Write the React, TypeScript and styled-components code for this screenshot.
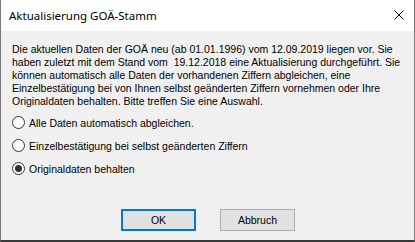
import React, { useState } from "react";
import styled, { createGlobalStyle } from "styled-components";

const Global = createGlobalStyle`
  html, body { margin: 0; padding: 0; background: #f0f0f0; }
  #root { width: 415px; height: 242px; }
`;

const Window = styled.div`
  box-sizing: border-box;
  width: 415px;
  height: 242px;
  display: flex;
  flex-direction: column;
  background: #f0f0f0;
  border-left: 1px solid #7a7a7a;
  border-right: 1px solid #7a7a7a;
  border-bottom: 2px solid #3a3a3a;
  font-family: "Liberation Sans", Arial, sans-serif;
`;

const TitleBar = styled.div`
  height: 31px;
  flex: none;
  background: #ffffff;
  display: flex;
  align-items: center;
  padding-left: 8px;
  padding-right: 10px;
`;

const Title = styled.div`
  flex: 1;
  font-family: "Noto Sans", "Open Sans", sans-serif;
  font-size: 11.5px;
  color: #000;
  padding-bottom: 1px;
`;

const CloseIcon = styled.svg`
  width: 10px;
  height: 10px;
  margin-top: -1px;
`;

const Body = styled.div`
  flex: 1;
  display: flex;
  flex-direction: column;
  padding: 12px 11px 0 11px;
`;

const Message = styled.div`
  font-size: 10.5px;
  line-height: 13px;
  color: #000;
  white-space: pre;
`;

const RadioGroup = styled.div`
  display: flex;
  flex-direction: column;
  margin-top: 3px;
`;

const RadioRow = styled.label`
  height: 23px;
  display: flex;
  align-items: center;
  gap: 4px;
  font-size: 10.5px;
  color: #000;
  cursor: default;
`;

const RadioCircle = styled.span<{ $checked: boolean }>`
  box-sizing: border-box;
  width: 13px;
  height: 13px;
  border-radius: 50%;
  border: 1px solid #333333;
  background: #ffffff;
  display: flex;
  align-items: center;
  justify-content: center;
  &::after {
    content: "";
    width: 7px;
    height: 7px;
    border-radius: 50%;
    background: #333333;
    display: ${(p) => (p.$checked ? "block" : "none")};
  }
`;

const ButtonRow = styled.div`
  display: flex;
  gap: 24px;
  margin-top: 29px;
  padding-left: 109px;
`;

const Button = styled.button<{ $default?: boolean }>`
  box-sizing: border-box;
  width: 75px;
  height: 22px;
  padding: 0;
  background: #e1e1e1;
  border: ${(p) => (p.$default ? "2px solid #0078d7" : "1px solid #adadad")};
  font-family: "Liberation Sans", Arial, sans-serif;
  font-size: 10.5px;
  color: #000;
`;

const lines = [
  "Die aktuellen Daten der GOÄ neu (ab 01.01.1996) vom 12.09.2019 liegen vor. Sie",
  "haben zuletzt mit dem Stand vom  19.12.2018 eine Aktualisierung durchgeführt. Sie",
  "können automatisch alle Daten der vorhandenen Ziffern abgleichen, eine",
  "Einzelbestätigung bei von Ihnen selbst geänderten Ziffern vornehmen oder Ihre",
  "Originaldaten behalten. Bitte treffen Sie eine Auswahl.",
];

const options = [
  "Alle Daten automatisch abgleichen.",
  "Einzelbestätigung bei selbst geänderten Ziffern",
  "Originaldaten behalten",
];

export default function App() {
  const [sel, setSel] = useState(2);
  return (
    <>
      <Global />
      <Window>
        <TitleBar>
          <Title>Aktualisierung GOÄ-Stamm</Title>
          <CloseIcon viewBox="0 0 10 10">
            <path d="M0.5 0.5 L9.5 9.5 M9.5 0.5 L0.5 9.5" stroke="#000" strokeWidth="1" />
          </CloseIcon>
        </TitleBar>
        <Body>
          <Message>
            {lines.map((l, i) => (
              <div key={i}>{l}</div>
            ))}
          </Message>
          <RadioGroup>
            {options.map((o, i) => (
              <RadioRow key={i} onClick={() => setSel(i)}>
                <RadioCircle $checked={sel === i} />
                {o}
              </RadioRow>
            ))}
          </RadioGroup>
          <ButtonRow>
            <Button $default>OK</Button>
            <Button>Abbruch</Button>
          </ButtonRow>
        </Body>
      </Window>
    </>
  );
}
